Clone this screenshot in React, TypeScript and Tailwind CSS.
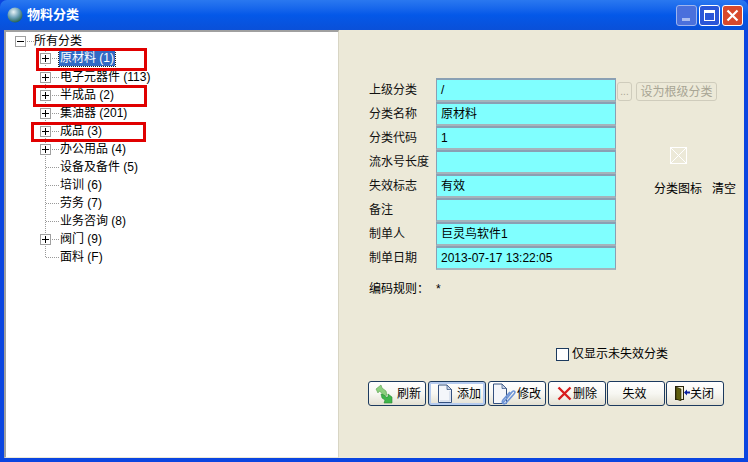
import React from 'react';

const treeItems = [
  { label: '原材料 (1)', plus: true, selected: true },
  { label: '电子元器件 (113)', plus: true },
  { label: '半成品 (2)', plus: true },
  { label: '集油器 (201)', plus: true },
  { label: '成品 (3)', plus: true },
  { label: '办公用品 (4)', plus: true },
  { label: '设备及备件 (5)', plus: false },
  { label: '培训 (6)', plus: false },
  { label: '劳务 (7)', plus: false },
  { label: '业务咨询 (8)', plus: false },
  { label: '阀门 (9)', plus: true },
  { label: '面料 (F)', plus: false, last: true },
];

const formRows = [
  { label: '上级分类', value: '/' },
  { label: '分类名称', value: '原材料' },
  { label: '分类代码', value: '1' },
  { label: '流水号长度', value: '' },
  { label: '失效标志', value: '有效' },
  { label: '备注', value: '' },
  { label: '制单人', value: '巨灵鸟软件1' },
  { label: '制单日期', value: '2013-07-17 13:22:05' },
];

const Glyph = ({ plus, minus, last, root }: { plus?: boolean; minus?: boolean; last?: boolean; root?: boolean }) => (
  <svg width="19" height="18" viewBox="0 0 19 18" className="shrink-0" shapeRendering="crispEdges">
    {!root && <line x1="5.5" y1="0" x2="5.5" y2={last ? 9 : 18} stroke="#999" strokeDasharray="1 1" />}
    <line x1="6" y1="9.5" x2="19" y2="9.5" stroke="#999" strokeDasharray="1 1" />
    {(plus || minus) && (
      <>
        <rect x="0.5" y="4.5" width="10" height="10" fill="#fff" stroke="#a0a0a0" />
        <line x1="2" y1="9.5" x2="9" y2="9.5" stroke="#000" />
        {plus && <line x1="5.5" y1="6" x2="5.5" y2="13" stroke="#000" />}
      </>
    )}
  </svg>
);

const RefreshIcon = () => (
  <svg width="20" height="20" viewBox="0 0 20 20" className="shrink-0">
    <path d="M2 5 L7 1 L8 4 L12 7 L13 11 L9 13 L8 9 L5 7 L4 9 Z" fill="#8ccf7e" stroke="#5aa54e" strokeWidth="0.6" />
    <path d="M18 19 L10 19 L11 16 L8 14 L7 10 L10 11 L12 13 L14 13 L14 10 L18 13 Z" fill="#3fb54a" stroke="#2c8c38" strokeWidth="0.6" />
  </svg>
);

const DocIcon = () => (
  <svg width="16" height="20" viewBox="0 0 16 20" className="shrink-0">
    <path d="M1.5 1 H10 L14.5 5.5 V18.5 H1.5 Z" fill="#f4f6fa" stroke="#33507f" />
    <path d="M10 1 V5.5 H14.5 Z" fill="#c7d3e6" stroke="#33507f" strokeWidth="0.7" />
    <path d="M3 17 H13 V7" fill="none" stroke="#c3cfe2" />
  </svg>
);

const EditIcon = () => (
  <svg width="24" height="22" viewBox="0 0 24 22" className="shrink-0">
    <path d="M1.5 1 H10 L14.5 5.5 V20.5 H1.5 Z" fill="#f4f6fa" stroke="#33507f" />
    <path d="M10 1 V5.5 H14.5 Z" fill="#c7d3e6" stroke="#33507f" strokeWidth="0.7" />
    <path d="M11 20 L20 9 C22 6.5 24 9 22 11 L14 20 C12 22 9 20 11 17 L18 9" fill="none" stroke="#6f95d6" strokeWidth="1.6" />
  </svg>
);

const DeleteIcon = () => (
  <svg width="15" height="15" viewBox="0 0 15 15" className="shrink-0">
    <path d="M1.5 1.5 L13.5 13.5 M13.5 1.5 L1.5 13.5" stroke="#d81e1e" strokeWidth="2.4" />
  </svg>
);

const DoorIcon = () => (
  <svg width="15" height="15" viewBox="0 0 15 15" className="shrink-0">
    <rect x="0.5" y="0.5" width="8" height="13" fill="#f3f0d0" stroke="#2a240a" />
    <path d="M1 1 L6 3 V15 L1 13 Z" fill="#5f5e0c" stroke="#221f06" strokeWidth="0.6" />
    <path d="M9 6.5 L12 3.5 V5.5 H15 V7.5 H12 V9.5 Z" fill="#0a1f9c" />
  </svg>
);

const Btn = ({ label, icon, focus, className }: { label: string; icon?: React.ReactNode; focus?: boolean; className?: string }) => (
  <button
    className={`w-[58px] h-[25px] shrink-0 flex items-center rounded-[3px] border border-[#1c3a5e] bg-gradient-to-b from-white via-[#f7f7f2] to-[#e3e0d2] text-[12px] text-black ${className ?? ''} ${focus ? 'shadow-[inset_0_0_0_2px_#b5cbef]' : ''}`}
  >
    {icon}
    <span className="whitespace-nowrap">{label}</span>
  </button>
);

const WinBtn = ({ children, className }: { children: React.ReactNode; className: string }) => (
  <div className={`w-[21px] h-[21px] rounded-[3px] border flex items-center justify-center ${className}`}>{children}</div>
);

export default function App() {
  return (
    <div className="relative w-[748px] h-[462px] overflow-hidden flex flex-col bg-[#0a45e0] font-['Liberation_Sans','Noto_Sans_CJK_SC',sans-serif] text-[12px] text-black">
      {/* Title bar */}
      <div className="h-[30px] shrink-0 flex items-center pl-[7px] pr-[5px] rounded-t-[7px] bg-gradient-to-b from-[#2a78f0] via-[#0458e8] to-[#0a50d8]">
        <svg width="16" height="16" viewBox="0 0 16 16" className="shrink-0">
          <defs>
            <radialGradient id="globe" cx="40%" cy="30%" r="75%">
              <stop offset="0%" stopColor="#e8f2f6" />
              <stop offset="50%" stopColor="#6fa3b8" />
              <stop offset="100%" stopColor="#1c5a48" />
            </radialGradient>
          </defs>
          <circle cx="8" cy="8" r="7.5" fill="url(#globe)" />
        </svg>
        <span className="ml-[4px] text-[13px] font-bold text-white">物料分类</span>
        <div className="ml-auto flex items-center gap-[2px]">
          <WinBtn className="bg-[#4a70dc] border-[#9db4ee]">
            <div className="w-[8px] h-[3px] mt-[8px] -ml-[2px] bg-[#a9bdf0]" />
          </WinBtn>
          <WinBtn className="bg-[#2a56d8] border-white">
            <div className="w-[11px] h-[11px] border border-white border-t-[3px]" />
          </WinBtn>
          <WinBtn className="bg-[#d8492c] border-white">
            <svg width="13" height="13" viewBox="0 0 13 13">
              <path d="M1.5 1.5 L11.5 11.5 M11.5 1.5 L1.5 11.5" stroke="#fff" strokeWidth="2.2" />
            </svg>
          </WinBtn>
        </div>
      </div>

      {/* Client area */}
      <div className="flex-1 flex mx-[4px] mb-[4px] bg-[#ece9d8] min-h-0">
        {/* Tree */}
        <div className="w-[335px] shrink-0 bg-white border-t-2 border-l-2 border-[#a0a0a0] border-r border-r-[#d8d5c4] border-b border-b-[#ece9d8]">
          <div className="flex items-center h-[18px] pl-[9px]">
            <Glyph minus root />
            <span>所有分类</span>
          </div>
          <div className="pl-[34px] -mt-[0.6px]">
            {treeItems.map((item) => (
              <div key={item.label} className="flex items-center h-[18.08px]">
                <Glyph plus={item.plus} last={item.last} />
                <span
                  className={
                    item.selected
                      ? 'px-[1px] h-[15px] leading-[15px] bg-[#316ac5] text-white outline outline-1 outline-dotted outline-[#222]'
                      : 'ml-[1px] whitespace-nowrap'
                  }
                >
                  {item.label}
                </span>
              </div>
            ))}
          </div>
        </div>

        {/* Form side */}
        <div className="flex-1 flex flex-col pl-[30px] pt-[48px] min-w-0">
          <div className="flex">
            <div className="w-[248px] shrink-0">
              {formRows.map((row) => (
                <div key={row.label} className="flex items-center h-[24px]">
                  <span className="w-[67px] shrink-0 whitespace-nowrap text-[#111]">{row.label}</span>
                  <div className="w-[180px] h-[24px] shrink-0 border border-t-2 border-[#8aa0b4] border-b-2 border-b-[#a5b4bc] bg-[#80ffff] flex items-center pl-[4px]">
                    {row.value}
                  </div>
                </div>
              ))}
            </div>
            <div className="flex-1 min-w-0">
              <div className="flex gap-[4px] mt-[4px]">
                <button className="w-[15px] h-[19px] rounded-[3px] border border-[#cfccbc] text-[10px] leading-none text-[#a8a594]">...</button>
                <button className="w-[81px] h-[19px] rounded-[3px] border border-[#cfccbc] text-[12px] text-[#a8a594] whitespace-nowrap">设为根级分类</button>
              </div>
              <svg width="17" height="17" viewBox="0 0 17 17" className="ml-[53px] mt-[46px]">
                <rect x="0.5" y="0.5" width="16" height="16" fill="none" stroke="#fff" />
                <path d="M1 1 L16 16 M16 1 L1 16" stroke="#fff" />
              </svg>
              <div className="flex ml-[37px] mt-[16px] gap-[10px] whitespace-nowrap">
                <span>分类图标</span>
                <span>清空</span>
              </div>
            </div>
          </div>

          <div className="flex mt-[12px] h-[14px] items-center">
            <span className="w-[67px] shrink-0">编码规则：</span>
            <span>*</span>
          </div>

          <div className="flex items-center mt-[51px] ml-[187px] h-[14px]">
            <div className="w-[13px] h-[13px] border border-[#1c3a5e] bg-white" />
            <span className="ml-[3px] whitespace-nowrap">仅显示未失效分类</span>
          </div>

          <div className="flex gap-[2px] mt-[20px] -ml-[1px]">
            <Btn label="刷新" icon={<RefreshIcon />} className="pl-[5px] gap-[3px]" />
            <Btn label="添加" icon={<DocIcon />} focus className="pl-[8px] gap-[4px]" />
            <Btn label="修改" icon={<EditIcon />} className="pl-[3px] gap-[1px]" />
            <Btn label="删除" icon={<DeleteIcon />} className="pl-[8px] gap-[1px]" />
            <Btn label="失效" className="justify-center pr-[3px] -ml-[1px]" />
            <Btn label="关闭" icon={<DoorIcon />} className="pl-[8px] -ml-[1px]" />
          </div>
        </div>
      </div>

      {/* Red annotations on the screenshot */}
      <div className="absolute left-[36px] top-[48px] w-[111px] h-[23px] border-[3px] border-[#e00000]" />
      <div className="absolute left-[33px] top-[85px] w-[114px] h-[22px] border-[3px] border-[#e00000]" />
      <div className="absolute left-[31px] top-[122px] w-[115px] h-[20px] border-[3px] border-[#e00000]" />
    </div>
  );
}
